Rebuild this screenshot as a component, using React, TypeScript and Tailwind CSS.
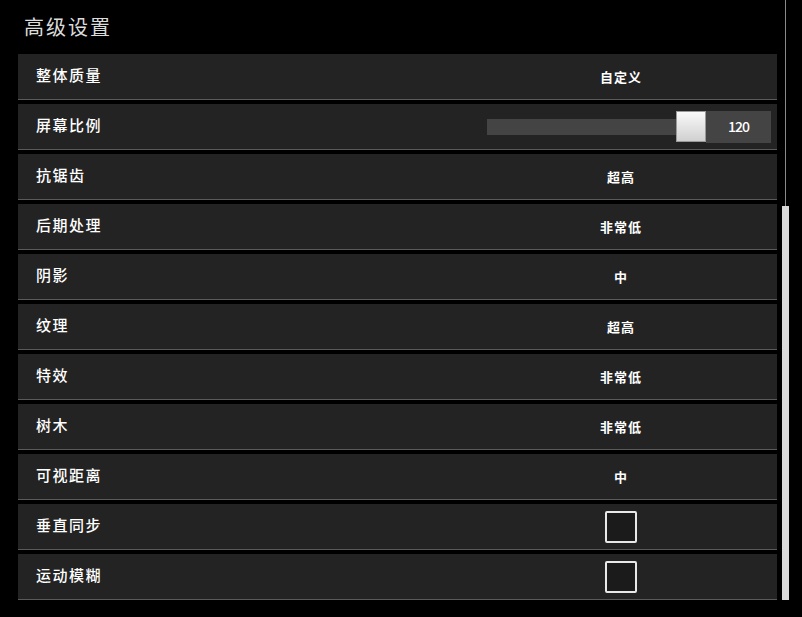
const rows: { label: string; value?: string; kind?: 'slider' | 'check' }[] = [
  { label: '整体质量', value: '自定义' },
  { label: '屏幕比例', kind: 'slider' },
  { label: '抗锯齿', value: '超高' },
  { label: '后期处理', value: '非常低' },
  { label: '阴影', value: '中' },
  { label: '纹理', value: '超高' },
  { label: '特效', value: '非常低' },
  { label: '树木', value: '非常低' },
  { label: '可视距离', value: '中' },
  { label: '垂直同步', kind: 'check' },
  { label: '运动模糊', kind: 'check' },
]

function Slider() {
  return (
    <div className="flex items-center pl-[16px]">
      <div className="w-[189px] h-[16px] bg-[#444444]" />
      <div className="w-[30px] h-[31px] border border-[#9a9a9a] bg-gradient-to-b from-[#fafafa] to-[#d0d0d0]" />
      <div className="w-[65px] h-[32px] bg-[#444444] flex items-center justify-center text-[14px] font-medium text-white tracking-[-1px]">
        120
      </div>
    </div>
  )
}

function Check() {
  return (
    <div className="flex justify-center">
      <div className="w-[32px] h-[32px] border-2 border-[#e8e8e8] bg-[#1b1b1b] rounded-[2px]" />
    </div>
  )
}

export default function App() {
  return (
    <div
      className="w-[802px] h-[617px] bg-black flex overflow-hidden"
      style={{ fontFamily: '"Noto Sans CJK SC", "Noto Sans", sans-serif' }}
    >
      <div className="ml-[18px] w-[759px] flex flex-col">
        <div className="h-[54px] pl-[6px] pt-[12px] text-[20px] leading-[30px] tracking-[2px] text-[#dcdcdc]">
          高级设置
        </div>
        <div className="flex flex-col gap-[4px]">
          {rows.map((r) => (
            <div
              key={r.label}
              className="h-[46px] bg-[#232323] border-b border-[#5a5a5a] flex items-center"
            >
              <div className="w-[453px] pl-[18px] pb-[2px] text-[15px] font-medium tracking-[1.5px] text-white">
                {r.label}
              </div>
              <div className="w-[300px]">
                {r.kind === 'slider' ? (
                  <Slider />
                ) : r.kind === 'check' ? (
                  <Check />
                ) : (
                  <div className="text-center text-[13px] font-bold tracking-[1px] text-white">{r.value}</div>
                )}
              </div>
            </div>
          ))}
        </div>
      </div>
      {/* scrollbar */}
      <div className="ml-[5px] w-[7px] flex flex-col items-center">
        <div className="w-px h-[206px] bg-[#8a8a8a]" />
        <div className="w-[7px] h-[394px] bg-[#d9d9d9]" />
      </div>
    </div>
  )
}
